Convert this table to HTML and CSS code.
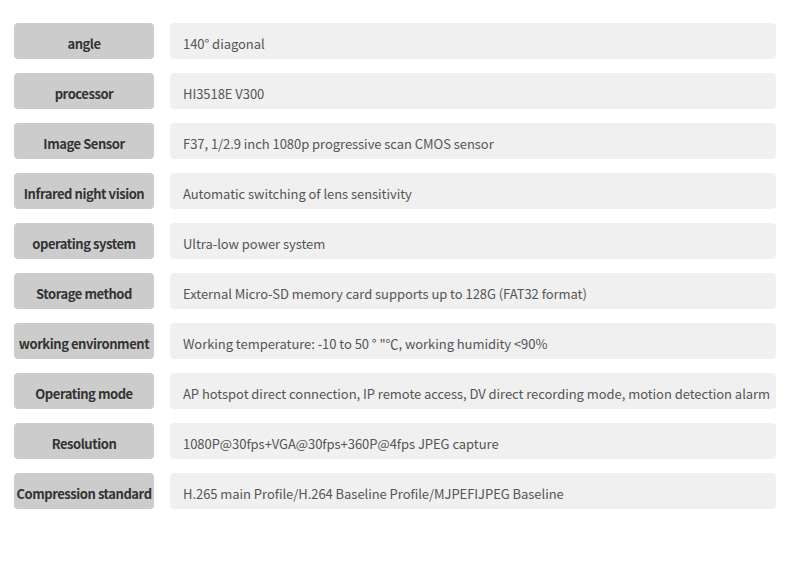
FILE: index.html
```html
<!DOCTYPE html>
<html>
<head>
<meta charset="utf-8">
<link rel="stylesheet" href="styles.css">
</head>
<body>
<div class="specs">
  <div class="row"><div class="label">angle</div><div class="value">140° diagonal</div></div>
  <div class="row"><div class="label">processor</div><div class="value">HI3518E V300</div></div>
  <div class="row"><div class="label">Image Sensor</div><div class="value">F37, 1/2.9 inch 1080p progressive scan CMOS sensor</div></div>
  <div class="row"><div class="label">Infrared night vision</div><div class="value">Automatic switching of lens sensitivity</div></div>
  <div class="row"><div class="label">operating system</div><div class="value">Ultra-low power system</div></div>
  <div class="row"><div class="label">Storage method</div><div class="value">External Micro-SD memory card supports up to 128G (FAT32 format)</div></div>
  <div class="row"><div class="label">working environment</div><div class="value">Working temperature: -10 to 50 ° "℃, working humidity &lt;90%</div></div>
  <div class="row"><div class="label">Operating mode</div><div class="value">AP hotspot direct connection, IP remote access, DV direct recording mode, motion detection alarm</div></div>
  <div class="row"><div class="label">Resolution</div><div class="value">1080P@30fps+VGA@30fps+360P@4fps JPEG capture</div></div>
  <div class="row"><div class="label">Compression standard</div><div class="value">H.265 main Profile/H.264 Baseline Profile/MJPEFIJPEG Baseline</div></div>
</div>
</body>
</html>
```
FILE: styles.css
```css
html, body { background: #ffffff; }
body {
  margin: 0;
  padding: 23px 14px 0 14px;
  font-family: "Noto Sans CJK SC", "Source Sans Pro", "Noto Sans", sans-serif;
}
.specs {
  display: flex;
  flex-direction: column;
  gap: 14px;
}
.row {
  display: flex;
  gap: 16px;
  height: 36px;
}
.label {
  flex: 0 0 140px;
  min-width: 0;
  box-sizing: border-box;
  background: #cccccc;
  border-radius: 4px;
  display: flex;
  align-items: center;
  justify-content: center;
  padding-top: 4px;
  font-size: 13px;
  font-weight: 700;
  color: #333333;
  letter-spacing: -0.45px;
  white-space: nowrap;
}
.value {
  flex: 1 1 0;
  min-width: 0;
  box-sizing: border-box;
  background: #f0f0f0;
  border-radius: 4px;
  display: flex;
  align-items: center;
  padding: 4px 0 0 13px;
  font-size: 13px;
  color: #555555;
  letter-spacing: -0.05px;
  white-space: nowrap;
}
```
